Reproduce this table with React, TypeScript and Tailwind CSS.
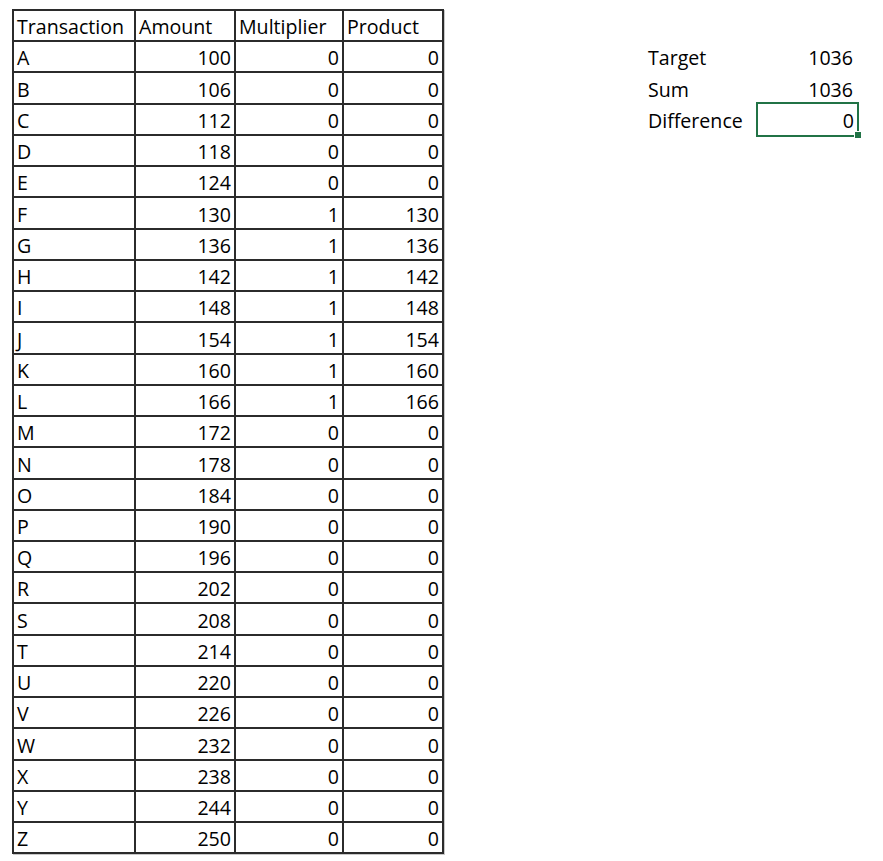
import React from "react";

const letters = "ABCDEFGHIJKLMNOPQRSTUVWXYZ".split("");
const rows = letters.map((l, i) => {
  const amount = 100 + 6 * i;
  const mult = i >= 5 && i <= 11 ? 1 : 0;
  return { l, amount, mult, product: amount * mult };
});

const cell =
  "h-[31.24px] border-r-2 border-b-2 border-[#2b2b2b] flex items-end pb-[3px] leading-[20px] overflow-hidden whitespace-nowrap";

export default function App() {
  return (
    <div
      className="w-[883px] h-[861px] bg-white text-black text-[19.6px] font-medium flex items-start"
      style={{ fontFamily: '"Open Sans", "Liberation Sans", sans-serif' }}
    >
      <div className="ml-[12px] mt-[9px] border-l-2 border-t-2 border-[#2b2b2b] grid grid-cols-[122px_100px_108px_100px] shadow-[1px_1px_0_#c8c8c8]">
        <div className={`${cell} pl-[3px]`}>Transaction</div>
        <div className={`${cell} pl-[3px]`}>Amount</div>
        <div className={`${cell} pl-[3px]`}>Multiplier</div>
        <div className={`${cell} pl-[3px]`}>Product</div>
        {rows.map((r) => (
          <React.Fragment key={r.l}>
            <div className={`${cell} pl-[3px]`}>{r.l}</div>
            <div className={`${cell} justify-end pr-[3px]`}>{r.amount}</div>
            <div className={`${cell} justify-end pr-[3px]`}>{r.mult}</div>
            <div className={`${cell} justify-end pr-[3px]`}>{r.product}</div>
          </React.Fragment>
        ))}
      </div>

      <div className="ml-[203px] mt-[11px] grid grid-cols-[109px_103px]">
        <div className="h-[31.24px]" />
        <div className="h-[31.24px]" />
        <div className="h-[31.24px] flex items-end pb-[5px] leading-[20px] pl-[1px]">Target</div>
        <div className="h-[31.24px] flex items-end justify-end pb-[5px] leading-[20px] pr-[6px]">1036</div>
        <div className="h-[31.24px] flex items-end pb-[5px] leading-[20px] pl-[1px]">Sum</div>
        <div className="h-[31.24px] flex items-end justify-end pb-[5px] leading-[20px] pr-[6px]">1036</div>
        <div className="h-[31.24px] flex items-end pb-[5px] leading-[20px] pl-[1px]">Difference</div>
        <div className="relative h-[31.24px] flex items-end justify-end pb-[5px] leading-[20px] pr-[5px]">
          0
          <div className="absolute left-0 right-0 -top-[3px] -bottom-[1px] border-2 border-[#217346]" />
          <div className="absolute -right-[3px] -bottom-[3px] w-[8px] h-[8px] bg-[#217346] border border-white" />
        </div>
      </div>
    </div>
  );
}
